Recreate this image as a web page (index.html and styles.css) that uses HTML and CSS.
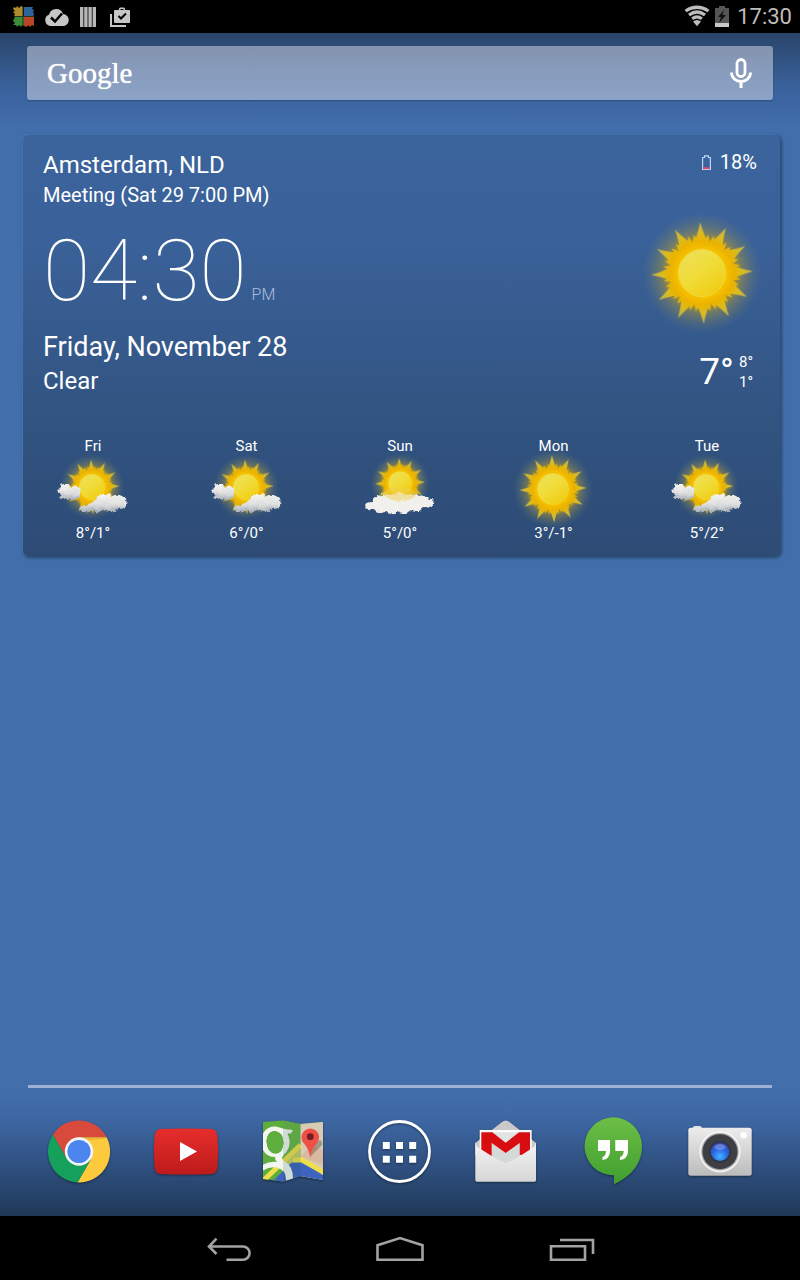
FILE: index.html
```html
<!DOCTYPE html>
<html lang="en">
<head>
<meta charset="utf-8">
<meta name="viewport" content="width=device-width, initial-scale=1">
<title>Home screen</title>
<link rel="stylesheet" href="styles.css">
</head>
<body>
<svg class="defs" aria-hidden="true">
  <defs>
    <radialGradient id="halo"><stop offset=".5" stop-color="#d9a400" stop-opacity=".85"/><stop offset=".68" stop-color="#a8963c" stop-opacity=".5"/><stop offset="1" stop-color="#6f8070" stop-opacity="0"/></radialGradient>
    <radialGradient id="corona" gradientUnits="userSpaceOnUse" cx="0" cy="0" r="49"><stop offset=".45" stop-color="#f9c600"/><stop offset=".65" stop-color="#ebb200"/><stop offset=".8" stop-color="#dcbb1c"/><stop offset="1" stop-color="#c2b54a"/></radialGradient>
    <linearGradient id="disc" x1=".1" y1="0" x2=".8" y2="1"><stop offset="0" stop-color="#ece05c"/><stop offset=".5" stop-color="#f0dc38"/><stop offset="1" stop-color="#f0cb10"/></linearGradient>
    <linearGradient id="cloud" x1="0" y1="0" x2="0" y2="1"><stop offset="0" stop-color="#f6f6f4"/><stop offset=".6" stop-color="#dcdcdc"/><stop offset="1" stop-color="#9fa8b4"/></linearGradient>
    <filter id="soft" x="-20%" y="-20%" width="140%" height="140%"><feGaussianBlur stdDeviation=".7"/></filter>
    <filter id="puff" x="-20%" y="-30%" width="140%" height="160%"><feTurbulence type="fractalNoise" baseFrequency=".22" numOctaves="2" seed="4"/><feDisplacementMap in="SourceGraphic" scale="5" xChannelSelector="R" yChannelSelector="G"/><feGaussianBlur stdDeviation=".6"/></filter>
    <path id="ray" d="M-8 -28Q-3 -38 0 -51Q3 -38 8 -28Z"/>
    <path id="ray-s" d="M-4 -28L0 -39L4 -28Z"/>
    <g id="rays3"><use href="#ray"/><use href="#ray-s" transform="rotate(11)"/><use href="#ray-s" transform="rotate(20)"/><use href="#ray" transform="rotate(30)"/><use href="#ray-s" transform="rotate(41)"/><use href="#ray-s" transform="rotate(50)"/><use href="#ray" transform="rotate(60)"/><use href="#ray-s" transform="rotate(71)"/><use href="#ray-s" transform="rotate(80)"/></g>
    <g id="sun">
      <circle r="60" fill="url(#halo)"/>
      <g fill="url(#corona)" filter="url(#soft)" transform="rotate(-2)">
        <circle r="31"/><use href="#rays3"/><use href="#rays3" transform="rotate(90)"/><use href="#rays3" transform="rotate(180)"/><use href="#rays3" transform="rotate(270)"/>
      </g>
      <circle r="23.5" fill="url(#disc)" stroke="#f3d83a" stroke-width="1"/>
    </g>
    <g id="partly">
      <use href="#sun" transform="translate(37 31) scale(.54)"/>
      <g filter="url(#puff)" fill="url(#cloud)">
        <path d="M4 38Q1 34 5 32Q4 28 9 28Q13 27 15 31Q19 28 23 31Q27 33 26 38Q27 43 21 43Q15 46 11 42Q5 43 4 38Z"/>
        <path d="M25 54Q26 49 32 50Q34 46 40 45Q42 39 48 38Q54 37 56 41Q61 37 67 40Q73 43 71 48Q71 53 64 53Q58 57 51 54Q43 58 37 55Q30 58 25 54Z"/>
      </g>
    </g>
    <g id="overcast">
      <use href="#sun" transform="translate(38 27) scale(.49)"/>
      <path filter="url(#puff)" fill="#f1f0ed" d="M3 50Q5 46 10 46Q12 40 19 39Q23 36 29 39Q37 34 45 39Q50 36 55 40Q63 38 66 43Q73 42 71 47Q69 53 61 52Q57 57 50 54Q43 61 35 56Q29 61 23 55Q15 58 12 53Q7 55 3 50Z"/>
      <ellipse cx="38" cy="38" rx="16" ry="7" fill="#f0d050" opacity=".5" filter="url(#puff)"/>
    </g>
    <linearGradient id="yt" x1="0" y1="0" x2="0" y2="1"><stop offset="0" stop-color="#e62e2c"/><stop offset="1" stop-color="#bd1a1b"/></linearGradient>
    <linearGradient id="paper" x1="0" y1="0" x2="0" y2="1"><stop offset="0" stop-color="#f4f4f4"/><stop offset="1" stop-color="#d6d6d6"/></linearGradient>
    <linearGradient id="hang" x1="0" y1="0" x2="0" y2="1"><stop offset="0" stop-color="#6dbe46"/><stop offset="1" stop-color="#3f9f2f"/></linearGradient>
    <linearGradient id="metal" x1="0" y1="0" x2="0" y2="1"><stop offset="0" stop-color="#ececec"/><stop offset="1" stop-color="#bcbcbc"/></linearGradient>
    <radialGradient id="lens" cx=".5" cy=".75" r=".7"><stop offset="0" stop-color="#45b4ff"/><stop offset=".5" stop-color="#2b70ea"/><stop offset="1" stop-color="#3343a5"/></radialGradient>
    <clipPath id="map-clip"><path d="M6 7L26 5.500L43.500 9L66 7L66 65L43.500 61L26 66.500L6 64Z"/></clipPath>
  </defs>
</svg>

<header class="status">
  <div class="status-group notifications">
    <svg width="24" height="33" viewBox="0 0 24 33" role="img" aria-label="AVG">
      <path d="M2 7l2 1 1-2 2 2 2-2 2 1v9H2l1-2-2-2 2-1-2-2z" fill="#b08a2c"/>
      <path d="M12 7h9l-1 2 2 1-1 2 1 2-1 3h-9z" fill="#2d649b"/>
      <path d="M3 17h9v9l-2-1-1 2-2-2-2 2-1-2H1l2-2-2-2z" fill="#3e8b3a"/>
      <path d="M12 17h10v9l-2-1-2 2-2-2-1 2-3-1z" fill="#b94524"/>
      <path d="M11 7v19M2 16.500h20" stroke="#26351c" stroke-width="1"/>
    </svg>
    <svg width="24" height="33" viewBox="0 0 24 33" role="img" aria-label="Upload complete"><path d="M6 26a6 6 0 0 1-.8-11.500A7.200 7.200 0 0 1 19 14a6 6 0 0 1-.5 12z" fill="#c6c6c6"/><path d="M7 17.500l4 4 7-8" fill="none" stroke="#000" stroke-width="2.500"/></svg>
    <svg width="24" height="33" viewBox="0 0 24 33" role="img" aria-label="Bars"><path d="M4 7h3.400v20H4zM8.200 7h3.400v20H8.200zM12.400 7h3.400v20h-3.400zM16.600 7h3.400v20h-3.400z" fill="#b8b8b8"/></svg>
    <svg width="24" height="33" viewBox="0 0 24 33" role="img" aria-label="Apps updated"><path d="M3 14v12h15" fill="none" stroke="#c6c6c6" stroke-width="2"/><path fill-rule="evenodd" d="M6 11q0-1 1-1h4V8.500L12 7.500h4l1 1V10h4q1 0 1 1v11q0 1-1 1H7q-1 0-1-1zM12.500 10h3V9h-3z" fill="#c6c6c6"/><path d="M10.500 16l2.500 2.500 5-5" fill="none" stroke="#000" stroke-width="2"/></svg>
  </div>
  <div class="status-group system">
    <svg width="28" height="33" viewBox="0 0 28 33" role="img" aria-label="Wi-Fi"><g fill="none" stroke="#bdbdbd" stroke-width="3.200"><path d="M2.500 11Q14 3.500 25.500 11M6 15Q14 9 22 15M9.200 18.800Q14 15 18.800 18.800"/></g><path d="M10 21.500Q14 18.500 18 21.500L14 26.200z" fill="#bdbdbd"/></svg>
    <svg width="16" height="33" viewBox="0 0 16 33" role="img" aria-label="Battery charging"><path d="M1 8h4V6h6v2h4v15H1z" fill="#555"/><path d="M1 23h14v4H1z" fill="#c9c9c9"/><path d="M10 10L4 17h3l-2 6 7-8H8.500z" fill="#111"/></svg>
    <time class="status-time">17:30</time>
  </div>
</header>

<main class="home">
  <form class="search" role="search">
    <button class="search-logo" type="button" aria-label="Google search">Google</button>
    <button class="search-mic" type="button" aria-label="Voice search">
      <svg width="24" height="32" viewBox="0 0 24 32" fill="none" stroke="#fff"><rect x="8" y="2.500" width="8" height="17" rx="4" stroke-width="2.800"/><path d="M2.500 15.500a9.500 9 0 0 0 19 0" stroke-width="2.800"/><path d="M12 24v7" stroke-width="3"/></svg>
    </button>
  </form>

  <section class="weather" aria-label="Clock and weather">
    <div class="current">
      <div class="info">
        <h1 class="place">Amsterdam, NLD</h1>
        <p class="event">Meeting (Sat 29 7:00 PM)</p>
        <p class="clock"><time>04:30</time><span class="meridiem">PM</span></p>
        <p class="date">Friday, November 28</p>
        <p class="condition">Clear</p>
      </div>
      <div class="readings">
        <p class="battery"><svg width="9" height="15" viewBox="0 0 9 15" aria-hidden="true"><path d="M.6 2.500h2V.8h3.800v1.700h2v12H.6z" fill="none" stroke="#b9d5f5" stroke-width="1.200"/><path d="M1.200 12.300h6.600v1.800H1.200z" fill="#f0436a"/></svg>18%</p>
        <svg class="sun" width="110" height="110" viewBox="-55 -55 110 110" role="img" aria-label="Clear"><use href="#sun"/></svg>
        <div class="temps"><span class="now">7°</span><span class="range"><span>8°</span><span>1°</span></span></div>
      </div>
    </div>
    <ul class="forecast">
      <li class="day"><span>Fri</span><svg width="76" height="64" viewBox="0 0 76 64" role="img" aria-label="Partly cloudy"><use href="#partly"/></svg><span>8°/1°</span></li>
      <li class="day"><span>Sat</span><svg width="76" height="64" viewBox="0 0 76 64" role="img" aria-label="Partly cloudy"><use href="#partly"/></svg><span>6°/0°</span></li>
      <li class="day"><span>Sun</span><svg width="76" height="64" viewBox="0 0 76 64" role="img" aria-label="Cloudy"><use href="#overcast"/></svg><span>5°/0°</span></li>
      <li class="day"><span>Mon</span><svg width="76" height="64" viewBox="0 0 76 64" role="img" aria-label="Sunny"><use href="#sun" transform="translate(37 33) scale(.66)"/></svg><span>3°/-1°</span></li>
      <li class="day"><span>Tue</span><svg width="76" height="64" viewBox="0 0 76 64" role="img" aria-label="Partly cloudy"><use href="#partly"/></svg><span>5°/2°</span></li>
    </ul>
  </section>

  <nav class="dock" aria-label="Favorite apps">
    <button class="app" type="button" aria-label="Chrome"><svg width="72" height="72" viewBox="0 0 72 72">
      <path d="M9.900 19.700A31 31 0 0 1 63.600 22.300L36 22.300V36.500L23.700 43.600Z" fill="#d84b3c"/>
      <path d="M63.600 22.300A31 31 0 0 1 34.500 67.500L48.300 43.600L36 36.500V22.300Z" fill="#fdca3e"/>
      <path d="M34.500 67.500A31 31 0 0 1 9.900 19.700L23.700 43.600L36 36.500L48.300 43.600Z" fill="#15a05c"/>
      <path d="M36 22.300H63.500L62 23.500L47 25Z" fill="#d99a2b" opacity=".5"/>
      <circle cx="36" cy="36.500" r="14.200" fill="#f5f5f5"/><circle cx="36" cy="36.500" r="11.600" fill="#4a86ee"/>
    </svg></button>
    <button class="app" type="button" aria-label="YouTube"><svg width="72" height="72" viewBox="0 0 72 72">
      <path d="M10 14Q36 13 62 14Q67 15 67.500 21Q69 36 67.500 52Q67 58 62 59Q36 60 10 59Q5 58 4.500 52Q3 36 4.500 21Q5 15 10 14Z" fill="url(#yt)"/><path d="M30 27L47 36.500L30 46Z" fill="#fff"/>
    </svg></button>
    <button class="app" type="button" aria-label="Maps"><svg width="72" height="72" viewBox="0 0 72 72">
      <g clip-path="url(#map-clip)">
        <path d="M0 0H72V72H0Z" fill="#5eae3d"/>
        <path d="M26 0H43.500V40L26 50Z" fill="#6cb545"/>
        <path d="M43.500 0H72V72H43.500Z" fill="#d8cbb4"/>
        <path d="M26 46L43.500 28V50L26 66Z" fill="#c8cf6a"/>
        <path d="M43.500 42L54 30L66 35V50L43.500 42Z" fill="#d9b9a2"/>
        <path d="M10 72L34 48L43.500 45L66 60V72Z" fill="#3e64bd"/>
        <path d="M6 66L43.500 30M36 45L45 45L68 58" fill="none" stroke="#efe04b" stroke-width="5"/>
        <path fill-rule="evenodd" d="M19 11.500Q27 14.500 36 15L34 18.500H30.500Q35 28 30 36Q27 41 21 42Q10 43 6 35Q2 25 7 17Q11 11 19 11.500ZM18 16Q10 16 9.500 26Q10 38 18.500 38.500Q26 38 26.500 28Q26 17 18 16Z" fill="#f3f6ef"/>
        <path d="M20 40H27Q23 43 27 46Q37 51 36 67H29Q30 55 20 52.500Q12 51 4 57V51Q11 46 20 47Q16 43 20 40Z" fill="#f3f6ef"/>
        <path d="M10 24Q12 16 18 16Q26 17 26.500 28Q26 38 18.500 38.500Q10 38 9.500 26Z" fill="#5eae3d"/>
        <path d="M26 5.500L43.500 9V61L26 66.500Z" fill="#174f53" opacity=".16"/>
      </g>
      <path d="M53 42L57 29L63 25Q66 27 65 30Z" fill="#514b3b" opacity=".4"/>
      <path d="M53.300 43Q52 34 47 28.500A8.800 8.800 0 1 1 59.600 28.500Q54.500 34 53.300 43Z" fill="#ee5045"/><circle cx="53.300" cy="21.700" r="3.400" fill="#721d22"/>
    </svg></button>
    <button class="app" type="button" aria-label="All apps"><svg width="72" height="72" viewBox="0 0 72 72">
      <circle cx="36.500" cy="36.500" r="30" fill="none" stroke="#fff" stroke-width="2.800"/>
      <path d="M19.800 27h7v7h-7zM33 27h7v7h-7zM46.200 27h7v7h-7zM19.800 40.800h7v7h-7zM33 40.800h7v7h-7zM46.200 40.800h7v7h-7z" fill="#fff"/>
    </svg></button>
    <button class="app" type="button" aria-label="Gmail"><svg width="72" height="72" viewBox="0 0 72 72">
      <path d="M5.300 28L32 7Q35.700 4 39.500 7L66 28V40H5.300Z" fill="#c9c9c9"/>
      <path d="M9.700 15H61.700V52H9.700Z" fill="#fafafa"/>
      <path d="M22 17.300H49.500L35.700 27.500Z" fill="#dfe3e3"/>
      <path d="M21.700 28L35.700 38L49.700 28V42L35.700 49L21.700 42Z" fill="#d5d9d8"/>
      <path d="M11.300 17.300H22.300L35.700 27.700L49 17.300H60V40H49.700V28L35.700 38L21.700 28V41H11.300Z" fill="#d80d12"/>
      <path d="M5.300 27Q6 31 9 33L32 47.500Q35.700 50 39.500 47.500L62.500 33Q65.500 31 66 27V65Q66 66.700 64.500 66.700H7Q5.300 66.700 5.300 65Z" fill="url(#paper)"/>
    </svg></button>
    <button class="app" type="button" aria-label="Hangouts"><svg width="72" height="72" viewBox="0 0 72 72">
      <path d="M36 2.300A29 29 0 0 1 65 31.300Q65 56 37 69.300V60.300A29 29 0 0 1 36 2.300Z" fill="url(#hang)"/>
      <path d="M21 25H33V37Q32.500 44 25.500 45V42Q29 41 29 36H21ZM38.300 25H51V37Q50.500 44 43 45V42Q46.700 41 46.700 36H38.300Z" fill="#fff"/>
    </svg></button>
    <button class="app" type="button" aria-label="Camera"><svg width="72" height="72" viewBox="0 0 72 72">
      <path d="M8.500 13Q9 11 11 11H15.500Q17.500 11 18 13Z" fill="#d9e6ea"/>
      <rect x="4.300" y="12.700" width="63.400" height="48" rx="2.500" fill="url(#metal)"/>
      <circle cx="36" cy="36.700" r="20.700" fill="#f3f3f3"/><circle cx="36" cy="36.700" r="18.800" fill="#aaa"/>
      <circle cx="36" cy="36.700" r="17.500" fill="#3e3f44"/><circle cx="36" cy="36.700" r="11" fill="#33353d"/>
      <circle cx="36" cy="36.700" r="9.300" fill="url(#lens)"/><ellipse cx="36" cy="32" rx="5.500" ry="3" fill="#a5b4f4" opacity=".45"/>
      <circle cx="59.700" cy="20.300" r="3.200" fill="#fff"/>
    </svg></button>
  </nav>
</main>

<nav class="navbar" aria-label="System">
  <button class="nav-key" type="button" aria-label="Back"><svg width="48" height="32" viewBox="0 0 48 32"><path d="M12.500 6.700L5 14.500L12.500 22M5.500 14.500H39A6.600 6.600 0 0 1 39 27.700H22.500"/></svg></button>
  <button class="nav-key" type="button" aria-label="Home"><svg width="48" height="32" viewBox="0 0 48 32"><path d="M1.500 13.300L24 6L46.500 13.300V27.800H1.500Z"/></svg></button>
  <button class="nav-key" type="button" aria-label="Recent apps"><svg width="48" height="32" viewBox="0 0 48 32"><path d="M3 14.300H37V27.800H3ZM12 8H45V22"/></svg></button>
</nav>
</body>
</html>
```
FILE: styles.css
```css
* {
  box-sizing: border-box;
}

body {
  margin: 0;
  min-height: 100vh;
  display: flex;
  flex-direction: column;
  background: #000;
  color: #fff;
  font-family: Roboto, "Noto Sans", sans-serif;
}

h1, p, ul {
  margin: 0;
  padding: 0;
  font-weight: 400;
}

button {
  border: 0;
  padding: 0;
  background: none;
  color: inherit;
  font: inherit;
  cursor: pointer;
}

svg {
  display: block;
  overflow: visible;
}

.defs {
  position: absolute;
  width: 0;
  height: 0;
}

/* Status bar */
.status {
  display: flex;
  justify-content: space-between;
  padding: 0 8px 0 12px;
  background: #000;
}

.status-group {
  display: flex;
  align-items: center;
}

.notifications {
  gap: 8px;
}

.system {
  gap: 3px;
}

.status-time {
  padding-left: 4px;
  color: #bdbdbd;
  font-size: 22px;
  line-height: 33px;
}

/* Wallpaper */
.home {
  flex: 1;
  display: flex;
  flex-direction: column;
  background:
    linear-gradient(to bottom, #29456a 0, #3b64a0 60px, #426eac 96px, transparent 96px),
    linear-gradient(to top, #1f3856 0, #2f5080 50px, #3d67a2 96px, #426eac 126px);
}

.search {
  display: flex;
  align-items: center;
  justify-content: space-between;
  height: 54px;
  margin: 13px 27px 0;
  padding: 0 20px;
  border-radius: 3px;
  background: linear-gradient(#8494b0, #8ba3c8);
  box-shadow: 0 1px 2px rgba(20, 40, 80, 0.4);
}

.search-logo {
  font-family: "Liberation Serif", serif;
  font-size: 29px;
  line-height: 48px;
  text-shadow: 0 0 1px #fff;
}

/* Clock and weather card */
.weather {
  margin: 35px 20px 0 23px;
  padding: 15px 23px 13px 20px;
  border-radius: 6px;
  background: linear-gradient(#3c649c, #3a6199 25%, #315380 70%, #2d4b75);
  box-shadow: -1px -1px 2px #4a77b5, 1px 1px 3px 1px #294668;
}

.current {
  display: flex;
  justify-content: space-between;
}

.place {
  font-size: 24px;
  line-height: 30px;
}

.event {
  font-size: 20px;
  line-height: 30px;
}

.clock {
  display: flex;
  align-items: baseline;
  gap: 5px;
  padding-top: 9px;
  font-size: 86px;
  line-height: 104px;
  font-weight: 100;
}

.meridiem {
  color: #a9bdda;
  font-size: 16px;
  line-height: 20px;
  font-weight: 300;
}

.date {
  padding-top: 6px;
  font-size: 27px;
  line-height: 36px;
}

.condition {
  font-size: 24px;
  line-height: 32px;
}

.readings {
  display: flex;
  flex-direction: column;
  align-items: flex-end;
}

.battery {
  display: flex;
  align-items: center;
  gap: 9px;
  font-size: 20px;
  line-height: 24px;
}

.sun {
  margin-top: 44px;
}

.temps {
  display: flex;
  align-items: center;
  gap: 5px;
  margin-top: 20px;
  padding-right: 4px;
}

.now {
  font-size: 37px;
  line-height: 48px;
}

.range {
  display: grid;
  justify-items: end;
  font-size: 15px;
  line-height: 20px;
}

.forecast {
  display: flex;
  justify-content: space-between;
  padding: 39px 12px 0;
  list-style: none;
}

.day {
  display: flex;
  flex-direction: column;
  align-items: center;
  font-size: 15px;
  line-height: 20px;
}

.day svg {
  margin-bottom: 3px;
}

/* App dock */
.dock {
  display: flex;
  justify-content: space-between;
  margin: auto 28px 0;
  padding: 27px 16px 29px 15px;
  border-top: 3px solid #9cb1d4;
}

.app {
  width: 72px;
  filter: drop-shadow(0 1px 1px rgba(0, 0, 0, 0.4));
}

/* System keys */
.navbar {
  display: flex;
  justify-content: center;
}

.nav-key {
  width: 172px;
  height: 64px;
  display: grid;
  place-items: center;
}

.nav-key path {
  fill: none;
  stroke: #a3a3a3;
  stroke-width: 2.600;
}
```
